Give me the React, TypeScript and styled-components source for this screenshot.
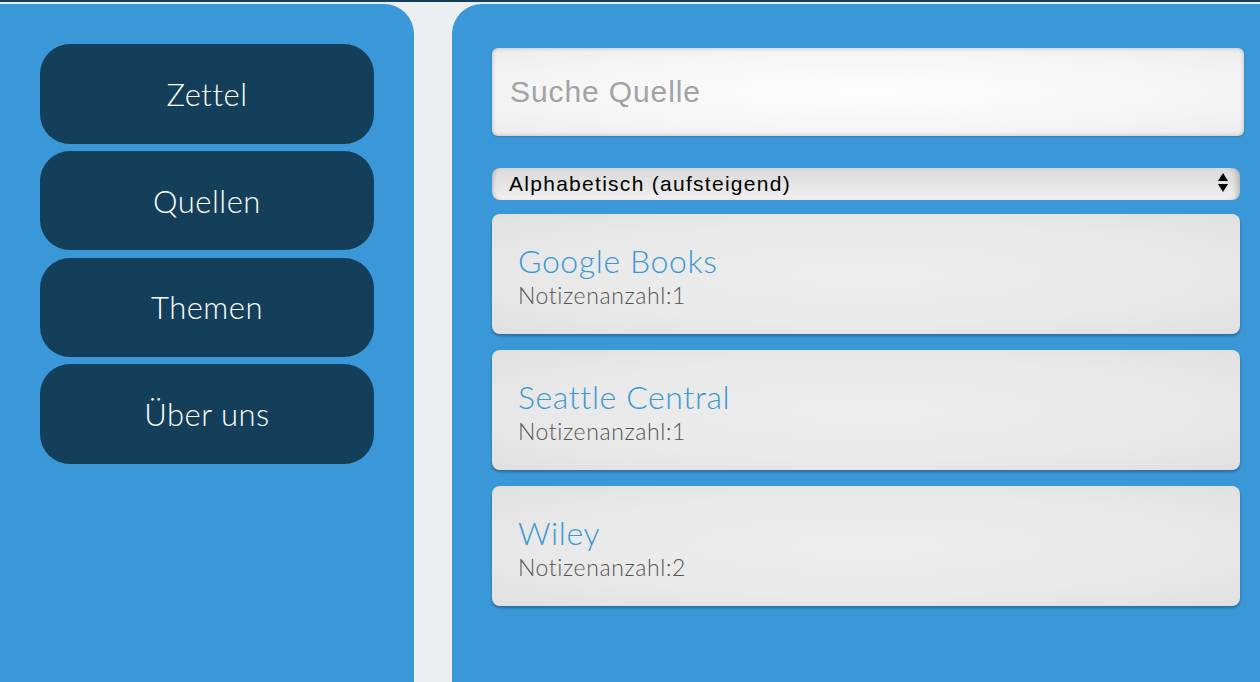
import React from "react";
import styled, { createGlobalStyle } from "styled-components";

const Global = createGlobalStyle`
  html, body { margin: 0; padding: 0; }
  body {
    background: #ebeff1;
    border-top: 2px solid #143f5b;
    height: 680px;
    overflow: hidden;
    font-family: "Lato", "Noto Sans", sans-serif;
  }
`;

const Layout = styled.div`
  display: grid;
  grid-template-columns: 414px 1fr;
  column-gap: 38px;
  padding-top: 2px;
  height: 678px;
`;

const Side = styled.nav`
  background: #3a98d8;
  border-top-right-radius: 30px;
  padding: 40px 40px 0 40px;
  display: flex;
  flex-direction: column;
  gap: 7.3px;
`;

const NavButton = styled.a`
  display: flex;
  align-items: center;
  justify-content: center;
  height: 99.5px;
  box-sizing: border-box;
  background: #143f5b;
  color: #ffffff;
  border-radius: 30px;
  font-family: "Lato", sans-serif;
  font-weight: 300;
  font-size: 31px;
  letter-spacing: 0.5px;
  text-decoration: none;
`;

const Main = styled.main`
  background: #3a98d8;
  border-top-left-radius: 30px;
  padding: 44px 16px 0 40px;
  display: flex;
  flex-direction: column;
`;

const Search = styled.input`
  height: 88px;
  box-sizing: border-box;
  border: none;
  border-radius: 6px;
  padding: 0 18px;
  background: radial-gradient(ellipse at center, #fdfdfd 0%, #f4f4f4 70%, #ececec 100%);
  box-shadow: inset 0 0 4px rgba(0, 0, 0, 0.25), 0 1px 2px rgba(0, 0, 0, 0.15);
  font-family: "Liberation Sans", Arial, sans-serif;
  font-size: 30px;
  letter-spacing: 0.9px;
  outline: none;
  &::placeholder { color: #a3a3a3; }
`;

const SelectWrap = styled.div`
  position: relative;
  margin-top: 32px;
  margin-right: 4px;
  height: 32px;
  border-radius: 8px;
  background: linear-gradient(to bottom, #dcdcdc 0%, #e2e2e2 45%, #f2f2f2 100%);
  box-shadow: inset -6px 0 6px -4px rgba(0, 0, 0, 0.25), inset 4px 0 5px -4px rgba(0,0,0,0.3);
  display: flex;
  align-items: center;
  padding-left: 17px;
  font-family: "Liberation Sans", Arial, sans-serif;
  font-size: 21px;
  letter-spacing: 1.28px;
  color: #000;
`;

const Arrows = styled.span`
  position: absolute;
  right: 12px;
  top: 5px;
  display: flex;
  flex-direction: column;
  gap: 3px;
`;

const List = styled.div`
  margin-top: 14px;
  margin-right: 4px;
  display: flex;
  flex-direction: column;
  gap: 16px;
`;

const Card = styled.div`
  height: 120px;
  box-sizing: border-box;
  border-radius: 8px;
  padding: 28px 26px 0;
  background: radial-gradient(ellipse at center, #ededed 0%, #e9e9e9 60%, #e0e0e0 100%);
  box-shadow: 0 2px 3px rgba(0, 0, 0, 0.3);
`;

const Title = styled.div`
  color: #3a98d8;
  font-family: "Lato", sans-serif;
  font-weight: 300;
  font-size: 32px;
  line-height: 38px;
  letter-spacing: 0.6px;
`;

const Count = styled.div`
  color: #555555;
  font-family: "Lato", sans-serif;
  font-weight: 300;
  font-size: 23px;
  line-height: 30px;
  letter-spacing: 0.6px;
`;

const nav = ["Zettel", "Quellen", "Themen", "Über uns"];
const sources = [
  { name: "Google Books", n: 1 },
  { name: "Seattle Central", n: 1 },
  { name: "Wiley", n: 2 },
];

export default function App() {
  return (
    <>
      <Global />
      <Layout>
        <Side>
          {nav.map((n) => (
            <NavButton key={n}>{n}</NavButton>
          ))}
        </Side>
        <Main>
          <Search placeholder="Suche Quelle" />
          <SelectWrap>
            Alphabetisch (aufsteigend)
            <Arrows>
              <svg width="10" height="8" viewBox="0 0 10 8"><path d="M5 0 L10 8 L0 8 Z" fill="#000" /></svg>
              <svg width="10" height="8" viewBox="0 0 10 8"><path d="M0 0 L10 0 L5 8 Z" fill="#000" /></svg>
            </Arrows>
          </SelectWrap>
          <List>
            {sources.map((s) => (
              <Card key={s.name}>
                <Title>{s.name}</Title>
                <Count>Notizenanzahl:{s.n}</Count>
              </Card>
            ))}
          </List>
        </Main>
      </Layout>
    </>
  );
}
